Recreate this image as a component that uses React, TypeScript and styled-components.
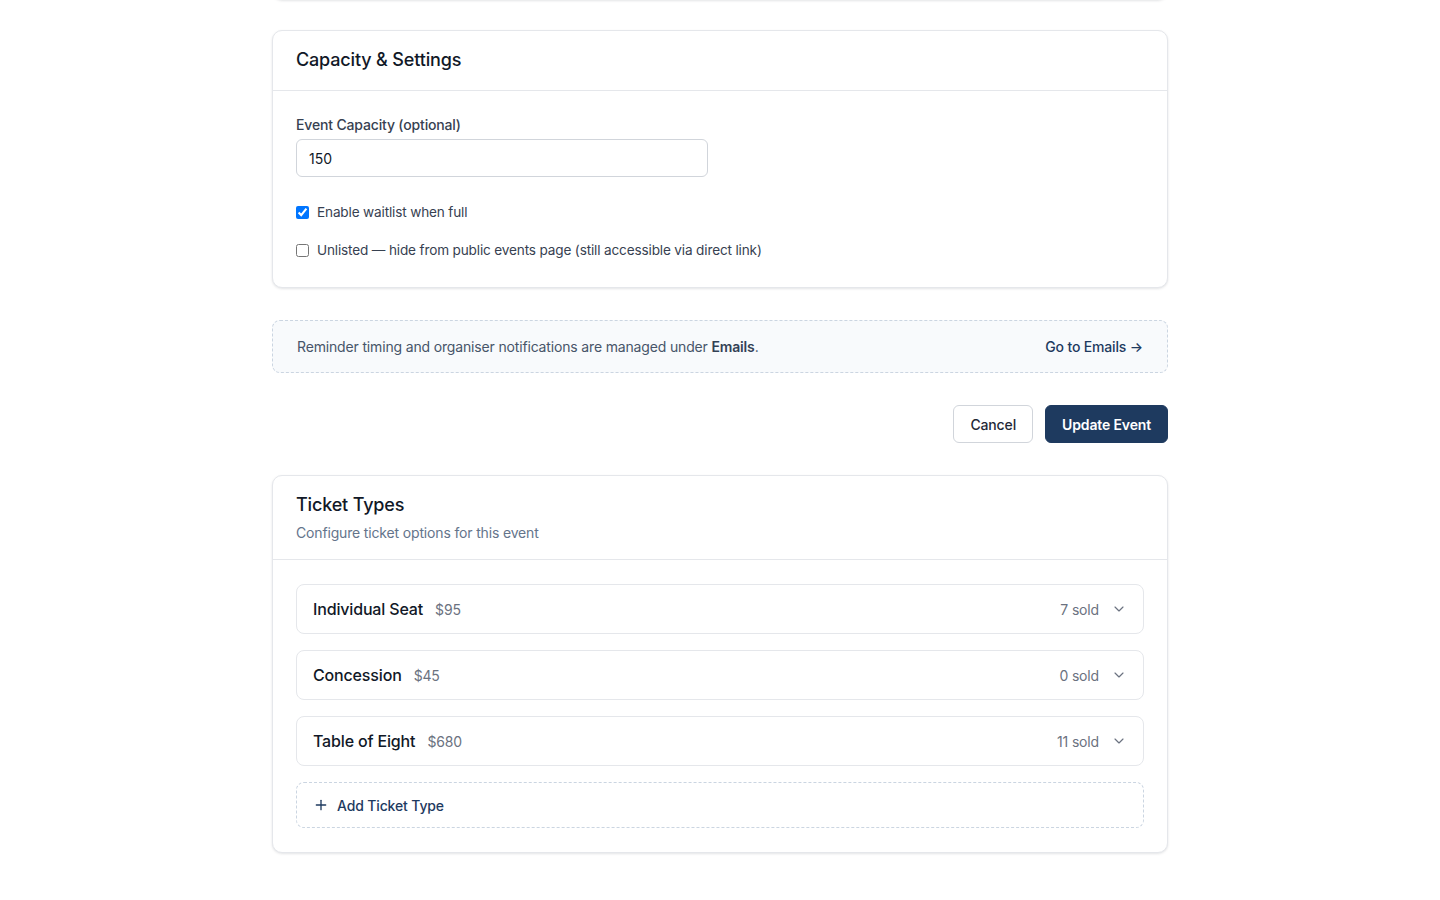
import React from 'react';
import styled, { createGlobalStyle } from 'styled-components';
import { ChevronDown, Plus } from 'lucide-react';

const GlobalStyle = createGlobalStyle`
  html, body {
    margin: 0;
    padding: 0;
    background: #ffffff;
  }

  body {
    font-family: 'Inter', 'Noto Sans', sans-serif;
    color: #111827;
    letter-spacing: -0.01em;
    -webkit-font-smoothing: antialiased;
  }

  * {
    box-sizing: border-box;
  }
`;

const Page = styled.main`
  width: 896px;
  margin: 0 auto;
  padding-bottom: 48px;
  display: flex;
  flex-direction: column;
  gap: 32px;
`;

const Card = styled.section`
  background: #ffffff;
  border: 1px solid #e5e7eb;
  border-radius: 10px;
  box-shadow: 0 1px 3px rgba(15, 23, 42, 0.08), 0 1px 2px rgba(15, 23, 42, 0.04);
`;

// tail of the card above, scrolled mostly out of view
const ScrolledCard = styled(Card)`
  height: 40px;
  margin-top: -40px;
  margin-bottom: -2px;
`;

const CardHeader = styled.header`
  padding: 17px 23px 18px;
  border-bottom: 1px solid #e5e7eb;
`;

const CardTitle = styled.h2`
  margin: 0;
  font-size: 18px;
  line-height: 24px;
  font-weight: 500;
  color: #111827;
`;

const CardSubtitle = styled.p`
  margin: 6px 0 -2px;
  font-size: 14px;
  line-height: 20px;
  color: #64748b;
`;

const CardBody = styled.div<{ $bottom?: number }>`
  padding: 24px 23px ${(p) => p.$bottom ?? 24}px;
  display: flex;
  flex-direction: column;
`;

const Label = styled.label`
  font-size: 14px;
  line-height: 20px;
  font-weight: 500;
  color: #374151;
  margin-bottom: 4px;
`;

const Input = styled.input`
  width: 412px;
  height: 38px;
  padding: 0 12px;
  border: 1px solid #d1d5db;
  border-radius: 6px;
  font-family: inherit;
  font-size: 14px;
  color: #111827;
  outline: none;
`;

const CheckList = styled.div`
  margin-top: 25px;
  display: flex;
  flex-direction: column;
  gap: 18px;
`;

const CheckRow = styled.label`
  display: flex;
  align-items: center;
  gap: 8px;
  font-size: 13.6px;
  line-height: 20px;
  color: #374151;

  input {
    margin: 0;
    width: 13px;
    height: 13px;
  }
`;

const Notice = styled.div`
  height: 53px;
  padding: 0 24px;
  display: flex;
  align-items: center;
  justify-content: space-between;
  background: #f8fafc;
  border: 1px dashed #cbd5e1;
  border-radius: 8px;
  font-size: 14px;
  color: #475569;

  strong {
    font-weight: 600;
    color: #334155;
  }
`;

const NoticeLink = styled.a`
  font-size: 14px;
  font-weight: 500;
  color: #1e3a5f;
  text-decoration: none;
`;

const Actions = styled.div`
  display: flex;
  justify-content: flex-end;
  gap: 12px;
`;

const Button = styled.button<{ $primary?: boolean }>`
  height: 38px;
  padding: 0 16px;
  border-radius: 6px;
  font-family: inherit;
  font-size: 14px;
  letter-spacing: -0.01em;
  font-weight: ${(p) => (p.$primary ? 600 : 500)};
  cursor: pointer;
  border: 1px solid ${(p) => (p.$primary ? '#1e3a5f' : '#d1d5db')};
  background: ${(p) => (p.$primary ? '#1e3a5f' : '#ffffff')};
  color: ${(p) => (p.$primary ? '#ffffff' : '#1f2937')};
`;

const TicketList = styled.div`
  display: flex;
  flex-direction: column;
  gap: 16px;
`;

const TicketRow = styled.div`
  height: 50px;
  padding: 0 16px;
  display: flex;
  align-items: center;
  justify-content: space-between;
  border: 1px solid #e5e7eb;
  border-radius: 8px;
`;

const TicketName = styled.span`
  font-size: 16px;
  font-weight: 500;
  color: #111827;
`;

const TicketPrice = styled.span`
  margin-left: 12px;
  font-size: 14px;
  color: #6b7280;
`;

const TicketMeta = styled.div`
  display: flex;
  align-items: center;
  gap: 12px;
  font-size: 14px;
  color: #6b7280;

  svg {
    color: #6b7280;
  }
`;

const AddButton = styled.button`
  height: 46px;
  padding: 0 16px;
  display: flex;
  align-items: center;
  gap: 8px;
  background: #ffffff;
  border: 1px dashed #cbd5e1;
  border-radius: 8px;
  font-family: inherit;
  font-size: 14px;
  letter-spacing: -0.01em;
  font-weight: 500;
  color: #1e3a5f;
  cursor: pointer;
`;

type TicketType = {
  name: string;
  price: string;
  sold: number;
};

const tickets: TicketType[] = [
  { name: 'Individual Seat', price: '$95', sold: 7 },
  { name: 'Concession', price: '$45', sold: 0 },
  { name: 'Table of Eight', price: '$680', sold: 11 },
];

export default function App() {
  return (
    <>
      <GlobalStyle />
      <Page>
        <ScrolledCard />

        <Card>
          <CardHeader>
            <CardTitle>Capacity &amp; Settings</CardTitle>
          </CardHeader>
          <CardBody $bottom={27}>
            <Label htmlFor="capacity">Event Capacity (optional)</Label>
            <Input id="capacity" type="text" defaultValue="150" />
            <CheckList>
              <CheckRow>
                <input type="checkbox" defaultChecked />
                Enable waitlist when full
              </CheckRow>
              <CheckRow>
                <input type="checkbox" />
                Unlisted — hide from public events page (still accessible via direct link)
              </CheckRow>
            </CheckList>
          </CardBody>
        </Card>

        <Notice>
          <span>
            Reminder timing and organiser notifications are managed under <strong>Emails</strong>.
          </span>
          <NoticeLink href="#">Go to Emails →</NoticeLink>
        </Notice>

        <Actions>
          <Button>Cancel</Button>
          <Button $primary>Update Event</Button>
        </Actions>

        <Card>
          <CardHeader>
            <CardTitle>Ticket Types</CardTitle>
            <CardSubtitle>Configure ticket options for this event</CardSubtitle>
          </CardHeader>
          <CardBody>
            <TicketList>
              {tickets.map((t) => (
                <TicketRow key={t.name}>
                  <div>
                    <TicketName>{t.name}</TicketName>
                    <TicketPrice>{t.price}</TicketPrice>
                  </div>
                  <TicketMeta>
                    <span>{t.sold} sold</span>
                    <ChevronDown size={16} strokeWidth={1.75} />
                  </TicketMeta>
                </TicketRow>
              ))}
              <AddButton>
                <Plus size={16} strokeWidth={2} />
                Add Ticket Type
              </AddButton>
            </TicketList>
          </CardBody>
        </Card>
      </Page>
    </>
  );
}
